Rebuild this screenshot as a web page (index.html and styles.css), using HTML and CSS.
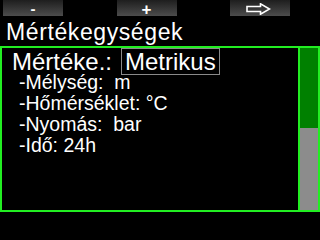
FILE: index.html
```html
<!DOCTYPE html>
<html lang="hu">
<head>
<meta charset="utf-8">
<title>Mértékegységek</title>
<link rel="stylesheet" href="styles.css">
</head>
<body>
<div class="screen">
  <div class="softkeys">
    <div class="key"><span class="key-label minus">-</span></div>
    <div class="key"><span class="key-label plus">+</span></div>
    <div class="key">
      <svg class="arrow" width="25" height="12" viewBox="0 0 25 12">
        <path d="M1 3.5 H14.5 V0.8 L23.5 6 L14.5 11.2 V8.5 H1 Z" fill="none" stroke="#fff" stroke-width="1.6" stroke-linejoin="miter"/>
      </svg>
    </div>
  </div>
  <h1 class="title">Mértékegységek</h1>
  <div class="panel">
    <div class="content">
      <div class="setting">
        <span class="setting-label">Mértéke.:</span>
        <span class="setting-value">Metrikus</span>
      </div>
      <ul class="units">
        <li>-Mélység:  m</li>
        <li>-Hőmérséklet: °C</li>
        <li>-Nyomás:  bar</li>
        <li>-Idő: 24h</li>
      </ul>
    </div>
    <div class="scrollbar">
      <div class="thumb"></div>
    </div>
  </div>
</div>
</body>
</html>
```

FILE: styles.css
```css
html, body {
  margin: 0;
  padding: 0;
  background: #000;
}

body {
  width: 320px;
  height: 240px;
  overflow: hidden;
  font-family: "Liberation Sans", Arial, sans-serif;
  color: #fff;
}

.screen {
  width: 320px;
  height: 240px;
  display: flex;
  flex-direction: column;
}

.softkeys {
  height: 16px;
  display: flex;
  justify-content: space-between;
  padding: 0 30px 0 3px;
}

.key {
  width: 60px;
  height: 16px;
  background: linear-gradient(#1e1e1e, #4c4c4c);
  display: flex;
  align-items: center;
  justify-content: center;
}

.key-label {
  font-weight: bold;
  font-size: 17px;
  line-height: 16px;
  color: #fff;
}

.minus {
  font-size: 15px;
  margin-top: 1px;
}

.plus {
  margin-top: 3px;
}

.arrow {
  display: block;
  margin-top: 1px;
  margin-left: -3px;
}

.title {
  margin: 0;
  height: 30px;
  font-size: 23px;
  font-weight: normal;
  line-height: 30px;
  letter-spacing: 0.6px;
  padding-left: 6px;
  padding-top: 1px;
  box-sizing: border-box;
}

.panel {
  height: 166px;
  border: 2px solid #22ee22;
  box-sizing: border-box;
  display: flex;
}

.content {
  flex: 1;
  border-right: 2px solid #22ee22;
}

.setting {
  display: flex;
  align-items: flex-start;
  font-size: 24px;
  line-height: 25px;
}

.setting-label {
  padding-left: 10px;
  margin-top: 1px;
}

.setting-value {
  margin-left: 9px;
  border: 1px solid #8a8a8a;
  padding: 0 3px 0 3px;
}

.units {
  list-style: none;
  margin: 0;
  padding: 0 0 0 17px;
  font-size: 19.5px;
}

.units li {
  white-space: pre;
  line-height: 14px;
  padding-bottom: 7px;
}

.scrollbar {
  width: 18px;
  background: #8c8c8c;
}

.thumb {
  height: 80px;
  background: #008000;
}
```
